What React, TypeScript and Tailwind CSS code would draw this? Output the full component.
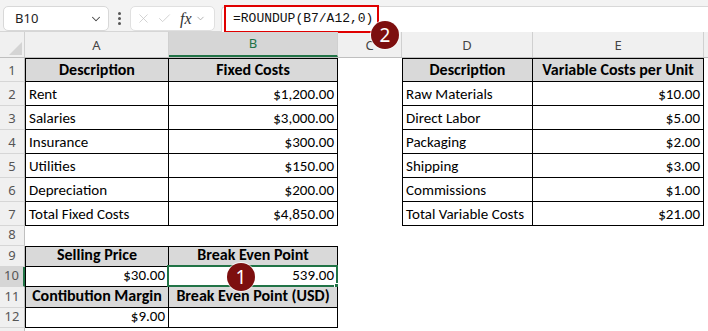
import { ChevronDown, X, Check } from 'lucide-react'

type Cell = {
  t?: string
  b?: boolean
  a?: 'l' | 'r' | 'c'
  box?: boolean
  top?: boolean
  left?: boolean
  sel?: boolean
}

type Row = { n: number; h: string; cells: Cell[] }

const H = (t: string, top = false, left = false): Cell => ({ t, b: true, a: 'c', box: true, top, left })
const L = (t: string): Cell => ({ t, a: 'l', box: true, left: true })
const R = (t: string): Cell => ({ t, a: 'r', box: true })
const E: Cell = {}

const rows: Row[] = [
  { n: 1, h: 'h-[24px]', cells: [H('Description', true, true), H('Fixed Costs', true), E, H('Description', true, true), H('Variable Costs per Unit', true)] },
  { n: 2, h: 'h-[24px]', cells: [L('Rent'), R('$1,200.00'), E, L('Raw Materials'), R('$10.00')] },
  { n: 3, h: 'h-[24px]', cells: [L('Salaries'), R('$3,000.00'), E, L('Direct Labor'), R('$5.00')] },
  { n: 4, h: 'h-[24px]', cells: [L('Insurance'), R('$300.00'), E, L('Packaging'), R('$2.00')] },
  { n: 5, h: 'h-[24px]', cells: [L('Utilities'), R('$150.00'), E, L('Shipping'), R('$3.00')] },
  { n: 6, h: 'h-[24px]', cells: [L('Depreciation'), R('$200.00'), E, L('Commissions'), R('$1.00')] },
  { n: 7, h: 'h-[24px]', cells: [L('Total Fixed Costs'), R('$4,850.00'), E, L('Total Variable Costs'), R('$21.00')] },
  { n: 8, h: 'h-[20px]', cells: [E, E, E, E, E] },
  { n: 9, h: 'h-[21px]', cells: [H('Selling Price', true, true), H('Break Even Point', true), E, E, E] },
  { n: 10, h: 'h-[20px]', cells: [{ ...R('$30.00'), left: true }, { ...R('539.00'), sel: true }, E, E, E] },
  { n: 11, h: 'h-[21px]', cells: [H('Contibution Margin', false, true), H('Break Even Point (USD)')] },
  { n: 12, h: 'h-[20px]', cells: [{ ...R('$9.00'), left: true }, R(''), E, E, E] },
]

const widths = ['w-[144px]', 'w-[169px]', 'w-[64px]', 'w-[131px]', 'w-[171px]']
const letters = ['A', 'B', 'C', 'D', 'E']

function SheetCell({ c, w }: { c: Cell; w: string }) {
  const align = c.a === 'r' ? 'justify-end' : c.a === 'c' ? 'justify-center' : 'justify-start'
  return (
    <div
      className={`${w} shrink-0 relative flex items-end px-[3px] pb-[1px] whitespace-nowrap overflow-visible ${align} ${
        c.box ? 'border-r border-b border-black' : ''
      } ${c.top ? 'border-t' : ''} ${c.left ? 'border-l' : ''} ${
        c.b ? 'font-bold text-[16px] bg-[#d9d9d9]' : 'bg-white'
      }`}
    >
      <span className="leading-[20px]">{c.t}</span>
      {c.sel && (
        <div className="absolute -left-[2px] -top-[2px] -right-[1px] -bottom-[1px] border-2 border-[#217346]">
          <div className="absolute -right-[4px] -bottom-[4px] w-[6px] h-[6px] bg-[#217346] border border-white" />
        </div>
      )}
    </div>
  )
}

export default function App() {
  return (
    <div className="relative w-[708px] h-[331px] overflow-hidden bg-white font-['Carlito','Lato',sans-serif] text-[15px] text-black">
      {/* formula bar */}
      <div className="h-[32px] bg-[#f3f3f3] flex items-start pt-[6px] pl-[3px] border-b border-[#d6d6d6] font-['Noto_Sans',sans-serif]">
        <div className="w-[106px] h-[25px] bg-white border border-[#d8d8d8] rounded-[5px] flex items-center justify-between pl-[11px] pr-[5px] text-[13px] text-[#222]">
          <span>B10</span>
          <ChevronDown size={14} strokeWidth={1.8} className="text-[#444]" />
        </div>
        <div className="w-[21px] h-[25px] flex flex-col items-center justify-center gap-[2px]">
          <span className="w-[3px] h-[3px] rounded-full bg-[#555]" />
          <span className="w-[3px] h-[3px] rounded-full bg-[#555]" />
          <span className="w-[3px] h-[3px] rounded-full bg-[#555]" />
        </div>
        <div className="w-[85px] h-[25px] bg-white border border-[#e0e0e0] rounded-[5px] flex items-center pl-[5px] gap-[6px]">
          <X size={15} strokeWidth={1.2} className="text-[#c4c4c4]" />
          <Check size={15} strokeWidth={1.2} className="text-[#c4c4c4]" />
          <span className="font-['Liberation_Serif',serif] italic text-[16px] text-[#333] leading-none ml-[2px]">fx</span>
          <ChevronDown size={11} strokeWidth={1.6} className="text-[#999] -ml-[3px]" />
        </div>
        <div className="ml-[6px] flex-1 h-[26px] bg-white border-l border-t border-[#d8d8d8] rounded-tl-[5px] flex items-center pl-[2px]">
          <div className="h-[28px] w-[155px] border-2 border-[#e00000] flex items-center pl-[7px] font-['Liberation_Mono',monospace] text-[13px] text-[#111] -mt-[2px]">
            =ROUNDUP(B7/A12,0)
          </div>
        </div>
      </div>

      {/* column headers */}
      <div className="flex h-[26px] bg-[#f0f0f0] border-b border-[#bfbfbf] font-['Noto_Sans',sans-serif] text-[13px] text-[#444]">
        <div className="w-[25px] shrink-0 relative border-r border-[#d0d0d0]">
          <div className="absolute right-[2px] bottom-[2px] w-0 h-0 border-l-[13px] border-l-transparent border-b-[13px] border-b-[#d4d4d4]" />
        </div>
        {letters.map((l, i) => (
          <div
            key={l}
            className={`${widths[i]} shrink-0 flex items-end justify-center pb-[2px] border-r border-[#d0d0d0] ${
              l === 'B' ? 'bg-[#d6d6d6] text-[#217346] border-b-2 border-b-[#217346]' : ''
            }`}
          >
            {l}
          </div>
        ))}
        <div className="flex-1" />
      </div>

      {/* grid */}
      {rows.map((r) => (
        <div key={r.n} className={`flex ${r.h}`}>
          <div
            className={`w-[25px] shrink-0 flex items-end justify-center pb-[1px] border-b border-[#d6d6d6] font-['Noto_Sans',sans-serif] text-[13px] text-[#555] ${
              r.n === 10 ? 'bg-[#d6d6d6] border-r-2 border-r-[#217346]' : 'bg-[#f0f0f0] border-r border-r-[#bfbfbf]'
            }`}
          >
            {r.n}
          </div>
          {widths.map((w, i) => (
            <SheetCell key={i} c={r.cells[i] ?? E} w={w} />
          ))}
        </div>
      ))}
      <div className="flex h-[10px]">
        <div className="w-[25px] bg-[#f0f0f0] border-r border-[#bfbfbf]" />
      </div>

      {/* callouts */}
      <div className="absolute left-[371px] top-[21px] w-[28px] h-[28px] rounded-full bg-[#7d0f0f] ring-1 ring-white/70 flex items-center justify-center text-white text-[19px] font-['Noto_Sans',sans-serif]">
        2
      </div>
      <div className="absolute left-[227px] top-[263px] w-[28px] h-[28px] rounded-full bg-[#7d0f0f] ring-1 ring-white/70 flex items-center justify-center text-white text-[19px] font-['Noto_Sans',sans-serif]">
        1
      </div>
    </div>
  )
}
